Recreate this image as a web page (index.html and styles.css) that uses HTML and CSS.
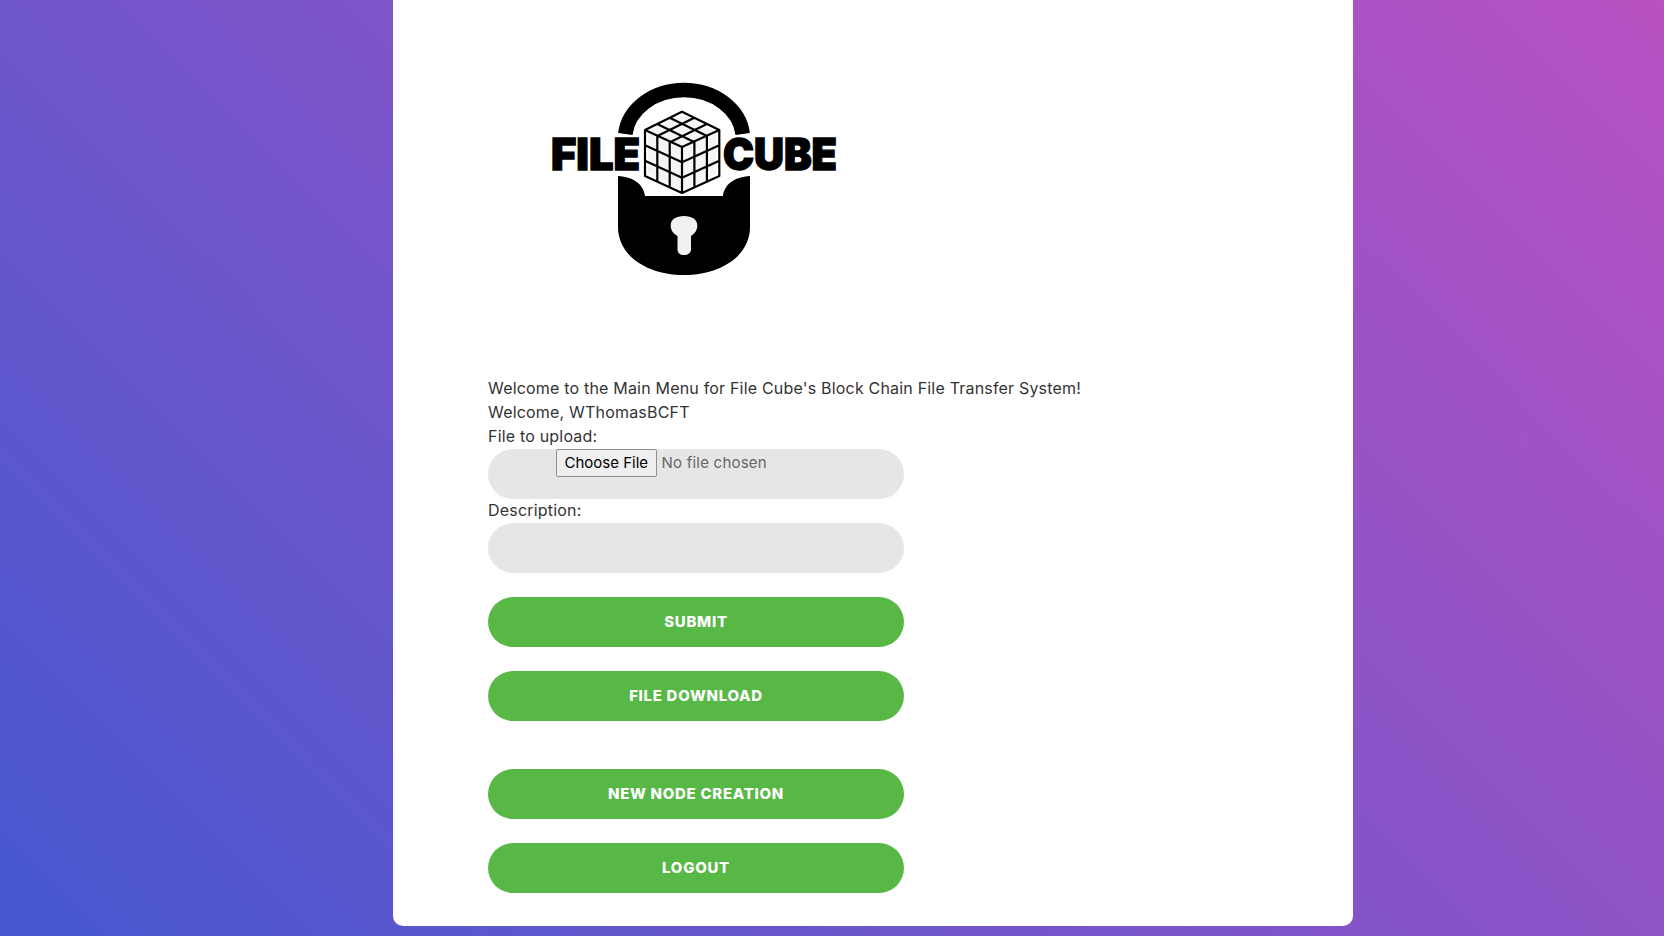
FILE: index.html
```html
<!DOCTYPE html>
<html lang="en">
<head>
<meta charset="utf-8">
<title>File Cube</title>
<link rel="stylesheet" href="styles.css">
</head>
<body>
<main class="card">
  <svg class="logo" viewBox="530 60 340 230" width="340" height="230" role="img" aria-label="File Cube logo">
    <path class="shackle" d="M625.3 133 A59 49 0 0 1 742.7 133"/>
    <path class="body" d="M618 175 C634 176 644 184 645 195 H723 C724 184 734 176 750 175 V226 C750 254 722 274 684 274 C646 274 618 254 618 226 Z"/>
    <path class="keyhole" d="M677.5 235 C672 232 670.7 228 670.7 224.5 C670.7 218.5 676 215 684 215 C692 215 697.3 218.5 697.3 224.5 C697.3 228 696 232 691 235 V248 C691 252 688 254 684 254 C680 254 677.5 252 677.5 248 Z"/>
    <text class="logo-word" x="551" y="168.5" textLength="89" lengthAdjust="spacingAndGlyphs">FILE</text>
    <text class="logo-word" x="723" y="168.5" textLength="114" lengthAdjust="spacingAndGlyphs">CUBE</text>
    <path class="cube-fill" d="M682 110.7 L719.3 129 V175 L682 192 L645 175 V129 Z"/>
    <path class="cube-lines" d="M682 110.7 L719.3 129 V175 L682 192 L645 175 V129 Z M645 129 L682 146 L719.3 129 M682 146 V192
      M669.7 116.8 L707 135.1 M657.3 122.9 L694.6 141.2 M694.4 116.8 L657.4 135.1 M706.9 122.9 L669.9 141.2
      M657.3 134.7 V180.7 M669.7 140.3 V186.3 M645 144.3 L682 161.3 M645 159.7 L682 176.7
      M694.4 140.3 V186.3 M706.9 134.7 V180.7 M682 161.3 L719.3 144.3 M682 176.7 L719.3 159.7"/>
  </svg>
  <form class="form">
    <p class="line">Welcome to the Main Menu for File Cube's Block Chain File Transfer System!</p>
    <p class="line">Welcome, WThomasBCFT</p>
    <label class="line" for="file">File to upload:</label>
    <input class="field field-file" id="file" type="file">
    <label class="line" for="desc">Description:</label>
    <input class="field" id="desc" type="text">
    <button class="btn" type="button">Submit</button>
    <button class="btn" type="button">File Download</button>
    <button class="btn btn-spaced" type="button">New Node Creation</button>
    <button class="btn" type="button">Logout</button>
  </form>
</main>
</body>
</html>
```
FILE: styles.css
```css
* { box-sizing: border-box; }
html, body { height: 100%; }
body {
  margin: 0;
  overflow: hidden;
  background: linear-gradient(-135deg, #c850c0, #4158d0) 0 -350px / 100% 1386px no-repeat;
  font-family: Inter, "Liberation Sans", sans-serif;
}
.card {
  width: 960px;
  height: 926px;
  margin-left: 393px;
  padding: 61px 0 0 95px;
  background: #fff;
  border-radius: 0 0 10px 10px;
}
.logo { display: block; margin: 0 0 85px 42px; }
.shackle { fill: none; stroke: #000; stroke-width: 14.5; }
.body { fill: #000; }
.keyhole { fill: #f1f1f1; }
.logo-word {
  font-family: Inter, "Liberation Sans", sans-serif;
  font-size: 44px;
  font-weight: 900;
  fill: #000;
  stroke: #000;
  stroke-width: 1.4;
}
.cube-fill { fill: #f5f5f5; stroke: #fff; stroke-width: 6; }
.cube-lines { fill: none; stroke: #000; stroke-width: 2.2; stroke-linejoin: round; }
.form { display: flex; flex-direction: column; align-items: flex-start; }
.line {
  display: block;
  margin: 0;
  font-size: 16px;
  line-height: 24px;
  color: #333;
  letter-spacing: 0.19px;
}
.field {
  display: block;
  width: 416px;
  height: 50px;
  margin: 1px 0 0;
  padding: 0 30px 0 68px;
  border: 0;
  border-radius: 25px;
  background: #e6e6e6;
  font: 15px/24px Inter, "Liberation Sans", sans-serif;
  letter-spacing: 0.22px;
  color: #666;
  outline: none;
}
.field-file { margin-bottom: -1px; }
.field-file::file-selector-button {
  height: 28px;
  margin-right: 5px;
  padding: 0 7.5px 2px;
  border: 1px solid #8f8f8f;
  border-radius: 2px;
  background: #efefef;
  color: #000;
  font: 15px Inter, "Liberation Sans", sans-serif;
  letter-spacing: 0;
}
.btn {
  display: block;
  width: 416px;
  height: 50px;
  margin: 24px 0 0;
  border: 0;
  border-radius: 25px;
  background: #57b846;
  color: #fff;
  font: 800 15px/24px Inter, "Liberation Sans", sans-serif;
  text-transform: uppercase;
  letter-spacing: 0.7px;
}
.btn-spaced { margin-top: 48px; }
```
